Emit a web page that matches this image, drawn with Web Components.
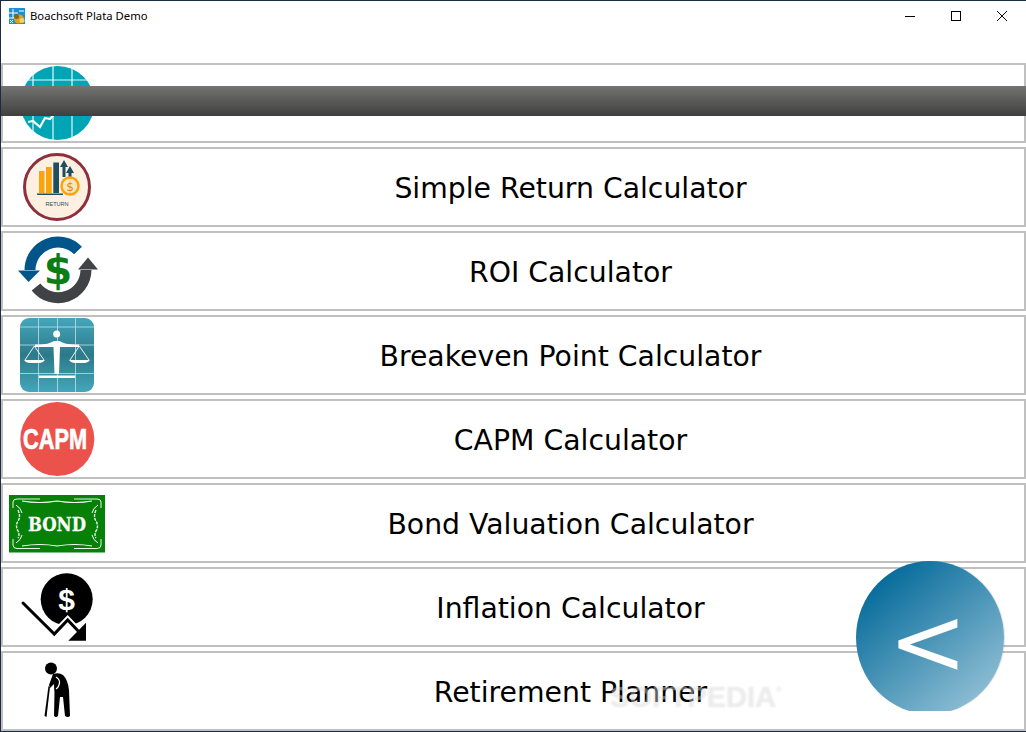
<!DOCTYPE html>
<html>
<head>
<meta charset="utf-8">
<title>Boachsoft Plata Demo</title>
<style>
    html, body { margin: 0; padding: 0; background: #fff; }
</style>
</head>
<body>
<app-window>
    <title-bar slot="title" text="Boachsoft Plata Demo"></title-bar>
    <calc-row><calc-icon slot="icon" name="stock"></calc-icon></calc-row>
    <calc-row><calc-icon slot="icon" name="return"></calc-icon>Simple Return Calculator</calc-row>
    <calc-row><calc-icon slot="icon" name="roi"></calc-icon>ROI Calculator</calc-row>
    <calc-row><calc-icon slot="icon" name="breakeven"></calc-icon>Breakeven Point Calculator</calc-row>
    <calc-row><calc-icon slot="icon" name="capm"></calc-icon>CAPM Calculator</calc-row>
    <calc-row><calc-icon slot="icon" name="bond"></calc-icon>Bond Valuation Calculator</calc-row>
    <calc-row><calc-icon slot="icon" name="inflation"></calc-icon>Inflation Calculator</calc-row>
    <calc-row><calc-icon slot="icon" name="retire"></calc-icon>Retirement Planner</calc-row>
    <busy-bar slot="overlay"></busy-bar>
    <back-button slot="overlay"></back-button>
    <water-mark slot="overlay"></water-mark>
</app-window>

<script>
class AppWindow extends HTMLElement {
    connectedCallback() {
        this.attachShadow({ mode: 'open' });
        this.shadowRoot.innerHTML = `
            <style>
                :host {
                    display: block;
                    position: relative;
                    box-sizing: border-box;
                    width: 1026px;
                    height: 732px;
                    overflow: hidden;
                    background: #fff;
                    border: 1px solid #1c2b44;
                    border-right-width: 0;
                }
                .list {
                    display: flex;
                    flex-direction: column;
                    gap: 4px;
                }
            </style>
            <slot name="title"></slot>
            <div class="list"><slot></slot></div>
            <slot name="overlay"></slot>
        `;
    }
}

class TitleBar extends HTMLElement {
    connectedCallback() {
        this.attachShadow({ mode: 'open' });
        this.shadowRoot.innerHTML = `
            <style>
                :host {
                    display: block;
                    height: 62px;
                    font: 11.300px "Noto Sans", sans-serif;
                    color: #000;
                }
                .bar {
                    display: flex;
                    align-items: center;
                    height: 30px;
                    padding-right: 1px;
                    padding-left: 8px;
                }
                .logo { display: block; margin-right: 5px; }
                .text { flex: 1; padding-bottom: 2px; }
                .btn {
                    display: flex;
                    align-items: center;
                    justify-content: center;
                    width: 46px;
                    height: 30px;
                }
                svg { display: block; }
            </style>
            <div class="bar">
                <svg class="logo" width="16" height="16" viewBox="0 0 16 16">
                    <rect width="16" height="16" fill="#1b8fd6"/>
                    <path d="M0 5h9M4 1v9M0 10h5M10 3h5" stroke="#fff" fill="none"/>
                    <path d="M1 12l3 3M4 12l-3 3" stroke="#fff" fill="none"/>
                    <ellipse cx="10" cy="11" rx="5" ry="4.500" fill="#d9a520"/>
                    <circle cx="7.500" cy="8.500" r="2.500" fill="#8a6414"/>
                    <circle cx="13" cy="12.500" r="2.500" fill="#f6d35b"/>
                </svg>
                <span class="text">${this.getAttribute('text')}</span>
                <div class="btn"><svg width="12" height="12" viewBox="0 0 12 12"><path d="M1 6.500h10" stroke="#000"/></svg></div>
                <div class="btn"><svg width="12" height="12" viewBox="0 0 12 12"><rect x="1.500" y="1.500" width="9" height="9" fill="none" stroke="#000"/></svg></div>
                <div class="btn"><svg width="12" height="12" viewBox="0 0 12 12"><path d="M1 1l10 10M11 1L1 11" stroke="#000"/></svg></div>
            </div>
        `;
    }
}

class CalcRow extends HTMLElement {
    connectedCallback() {
        this.attachShadow({ mode: 'open' });
        this.shadowRoot.innerHTML = `
            <style>
                :host {
                    display: flex;
                    box-sizing: border-box;
                    height: 80px;
                    border: 2px solid #c0c0c0;
                    font: 28.300px "DejaVu Sans", sans-serif;
                    color: #000;
                }
                .icon { flex: none; width: 114px; height: 76px; }
                .label {
                    flex: 1;
                    display: flex;
                    align-items: center;
                    justify-content: center;
                    padding-top: 2px;
                }
            </style>
            <div class="icon"><slot name="icon"></slot></div>
            <div class="label"><slot></slot></div>
        `;
    }
}

// drawn in screen coordinates, the viewBox moves them into the row
const ICONS = {
    stock: { top: 65, art: `
        <circle cx="57.500" cy="103" r="37" fill="#00a5b5"/>
        <path d="M33 70v66M53 65v76M72 65v76M22 80h72" stroke="#e6f7f9" stroke-width="1.200"/>
        <path d="M28 122l5-1 7 6 5-9 5 1 5-6" fill="none" stroke="#fff" stroke-width="2.200"/>` },
    return: { top: 149, art: `
        <circle cx="57" cy="187" r="32.500" fill="#fdf0e0" stroke="#8e2f3d" stroke-width="3"/>
        <path d="M39 171h5.500v22H39zM46 167h5.700v26H46z" fill="#f9a40a"/>
        <path d="M53.300 162.500H59V193h-5.700z" fill="#1f4e63"/>
        <path d="M37 193.500h26v1.500H37z" fill="#1f4e63"/>
        <path d="M64 160l4 7h-2.500v10h-3v-10H60zM70 166l4 7h-2.500v5h-3v-5H66z" fill="#1f4e63"/>
        <circle cx="70" cy="186" r="8.500" fill="#fde6bf" stroke="#f9a40a" stroke-width="2.500"/>
        <text x="70" y="190.500" font-family="DejaVu Sans" font-size="12" fill="#e08a10" text-anchor="middle">$</text>
        <text x="57" y="206" font-family="Liberation Sans" font-size="5.500" fill="#1f4e63" text-anchor="middle">RETURN</text>` },
    roi: { top: 233, art: `
        <path d="M78 250.500A28 28 0 0 0 30 270" fill="none" stroke="#00568a" stroke-width="11"/>
        <path d="M18 270.500H40L28.500 282z" fill="#00568a"/>
        <path d="M36 287A28 28 0 0 0 86 270" fill="none" stroke="#3f4346" stroke-width="11"/>
        <path d="M78 269.500H98L88 257.500z" fill="#3f4346"/>
        <text x="58" y="284" font-family="DejaVu Sans" font-weight="700" font-size="41" fill="#0a7d14" text-anchor="middle">$</text>` },
    breakeven: { top: 317, art: `
        <defs><linearGradient id="t" x1="0" y1="0" x2="0" y2="1">
            <stop offset="0" stop-color="#44a6bb"/><stop offset=".5" stop-color="#2c7a89"/><stop offset="1" stop-color="#44a6bb"/>
        </linearGradient></defs>
        <rect x="20" y="318" width="74" height="74" rx="9" fill="url(#t)"/>
        <path d="M38.500 318v74M57.500 318v74M75.500 318v74M20 327h74M20 345h74M20 373.500h74" stroke="#bfe0e7" stroke-width=".8"/>
        <circle cx="56.700" cy="334" r="3.500" fill="#fff"/>
        <path d="M35 344.500Q48 345 54 341H59.500Q65 345 79 344.500V347H60L59 374H54.500L53.500 347H35z" fill="#fff"/>
        <path d="M39 375.500h36v2.500H39z" fill="#fff"/>
        <path d="M34.300 346L25 360M34.300 346L44 360M79.300 346L70 360M79.300 346L89 360" stroke="#fff" stroke-width=".9" fill="none"/>
        <path d="M24 360h21q-2 3-5 3H29q-3 0-5-3zM69 360h21q-2 3-5 3H74q-3 0-5-3z" fill="#fff"/>` },
    capm: { top: 401, art: `
        <circle cx="57.300" cy="439" r="37" fill="#ea524b"/>
        <text x="55" y="448.500" font-family="Liberation Sans" font-weight="700" font-size="30" fill="#fff" stroke="#fff" stroke-width=".7" text-anchor="middle" textLength="64" lengthAdjust="spacingAndGlyphs">CAPM</text>` },
    bond: { top: 485, art: `
        <rect x="9" y="495" width="96" height="57.500" fill="#078007"/>
        <path d="M13 508V502Q13 499 17 499H40M101 508V502Q101 499 97 499H74M13 539V545Q13 548.500 17 548.500H40M101 539V545Q101 548.500 97 548.500H74" fill="none" stroke="#e8f6e8" stroke-width="1"/>
        <path d="M16 505q5 3 6 8M98 505q-5 3-6 8M16 543q5-3 6-8M98 543q-5-3-6-8" fill="none" stroke="#fff" stroke-width="1"/>
        <path d="M18 510q3 7 0 11q-3 5 0 10q2 4 0 7M96 510q-3 7 0 11q3 5 0 10q-2 4 0 7" fill="none" stroke="#e8f6e8" stroke-width="1.400" stroke-dasharray="3 1"/>
        <path d="M22 501q18 3 35 0q18 3 35 0M22 546q18-3 35 0q18-3 35 0" fill="none" stroke="#fff" stroke-width="1.200"/>
        <text x="57" y="531" font-family="DejaVu Serif" font-weight="700" font-size="19" fill="#fff" stroke="#fff" stroke-width=".3" text-anchor="middle" textLength="58" lengthAdjust="spacingAndGlyphs">BOND</text>` },
    inflation: { top: 569, art: `
        <circle cx="66.700" cy="599.300" r="26" fill="#000"/>
        <text x="66.700" y="610" font-family="Liberation Sans" font-weight="700" font-size="30" fill="#fff" text-anchor="middle">$</text>
        <path d="M23 603L54.300 634L67.700 620L80 633" fill="none" stroke="#fff" stroke-width="7"/>
        <path d="M23 603L54.300 634L67.700 620L80 633" fill="none" stroke="#000" stroke-width="3" stroke-linecap="round"/>
        <path d="M86 622.700V640.700H68.300z" fill="#000"/>` },
    retire: { top: 653, art: `
        <circle cx="51" cy="668.500" r="6" fill="#000"/>
        <path d="M53 674Q59 672 63 675Q68 680 69 690L70 716Q68 718 65 716L63 697L60 697L58 716Q56 718 54 716L54.500 693Q54 688 54 684L50 688L49 685z" fill="#000"/>
        <path d="M48.500 686L50 687L46.500 717L44.500 716z" fill="#000"/>
        <path d="M56 677Q61 680 59 685Q58 688 56 689" fill="none" stroke="#fff" stroke-width="1.200"/>` }
};

class CalcIcon extends HTMLElement {
    connectedCallback() {
        const icon = ICONS[this.getAttribute('name')];
        this.attachShadow({ mode: 'open' });
        this.shadowRoot.innerHTML = `
            <style>
                :host { display: block; width: 114px; height: 76px; }
                svg { display: block; overflow: hidden; }
            </style>
            <svg width="114" height="76" viewBox="3 ${icon.top} 114 76">${icon.art}</svg>
        `;
    }
}

class BusyBar extends HTMLElement {
    connectedCallback() {
        this.attachShadow({ mode: 'open' });
        this.shadowRoot.innerHTML = `
            <style>
                :host {
                    display: block;
                    position: absolute;
                    left: 0;
                    right: 0;
                    top: 85px;
                    height: 30px;
                    background: linear-gradient(#737471, #3f3f3f);
                }
            </style>
        `;
    }
}

class BackButton extends HTMLElement {
    connectedCallback() {
        this.attachShadow({ mode: 'open' });
        this.shadowRoot.innerHTML = `
            <style>
                :host {
                    display: block;
                    position: absolute;
                    left: 855px;
                    top: 560px;
                    width: 149px;
                    height: 150px;
                    overflow: hidden;
                }
                .disc {
                    display: flex;
                    align-items: center;
                    justify-content: center;
                    box-sizing: border-box;
                    padding: 8px 4px 0 0;
                    width: 148px;
                    height: 153px;
                    border-radius: 50%;
                    background: linear-gradient(140deg, #046a9a 12%, #92c0d5 90%);
                    box-shadow: 1px 0 1px rgba(0,0,0,.12);
                    font: 94px "DejaVu Sans", sans-serif;
                    color: #fff;
                }
            </style>
            <div class="disc">&lt;</div>
        `;
    }
}

class WaterMark extends HTMLElement {
    connectedCallback() {
        this.attachShadow({ mode: 'open' });
        this.shadowRoot.innerHTML = `
            <style>
                :host {
                    display: block;
                    position: absolute;
                    left: 609px;
                    top: 680px;
                    font: 700 29px "Liberation Sans", sans-serif;
                    color: rgba(255,255,255,.4);
                    text-shadow: 0 0 2px rgba(0,0,0,.12);
                }
                sup { font-size: 8px; vertical-align: 15px; }
            </style>
            SOFTPEDIA<sup>®</sup>
        `;
    }
}

customElements.define('app-window', AppWindow);
customElements.define('title-bar', TitleBar);
customElements.define('calc-row', CalcRow);
customElements.define('calc-icon', CalcIcon);
customElements.define('busy-bar', BusyBar);
customElements.define('back-button', BackButton);
customElements.define('water-mark', WaterMark);
</script>
</body>
</html>
